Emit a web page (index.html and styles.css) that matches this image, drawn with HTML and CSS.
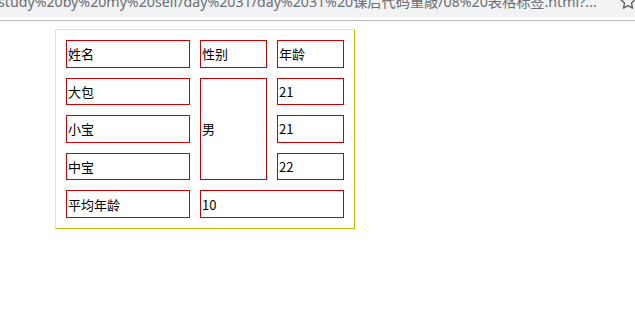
FILE: index.html
```html
<!DOCTYPE html>
<html lang="zh-CN">
<head>
<meta charset="utf-8">
<title>08 表格标签</title>
<link rel="stylesheet" href="styles.css">
</head>
<body>
<div class="chrome">
  <div class="bar">
    <span class="url">study%20by%20my%20self/day%2031/day%2031%20课后代码重敲/08%20表格标签.html?...</span>
    <svg class="star" width="18" height="18" viewBox="0 0 18 18"><path d="M9 1.5l2.2 4.6 5 .6-3.7 3.4 1 5-4.5-2.5-4.5 2.5 1-5L1.8 6.7l5-.6z" fill="none" stroke="#5f6368" stroke-width="1.4" stroke-linejoin="round"/></svg>
  </div>
  <div class="sep"></div>
</div>
<main class="page">
  <table class="grid">
    <tr>
      <td class="c1">姓名</td>
      <td class="c2">性别</td>
      <td class="c3">年龄</td>
    </tr>
    <tr>
      <td>大包</td>
      <td rowspan="3">男</td>
      <td>21</td>
    </tr>
    <tr>
      <td>小宝</td>
      <td>21</td>
    </tr>
    <tr>
      <td>中宝</td>
      <td>22</td>
    </tr>
    <tr>
      <td>平均年龄</td>
      <td colspan="2">10</td>
    </tr>
  </table>
</main>
</body>
</html>
```
FILE: styles.css
```css
html, body {
  margin: 0;
  padding: 0;
  background: #fff;
}
body {
  font-family: "Noto Sans CJK SC", "Noto Sans", sans-serif;
}
.chrome {
  height: 21px;
  display: flex;
  flex-direction: column;
}
.bar {
  height: 17px;
  background: #f1f3f4;
  overflow: hidden;
  position: relative;
}
.url {
  display: block;
  white-space: nowrap;
  font-family: "Noto Sans", "Noto Sans CJK SC", sans-serif;
  font-size: 14.2px;
  line-height: 20px;
  margin-top: -8px;
  margin-left: -2px;
  color: #6b6e72;
}
.star {
  position: absolute;
  right: -2px;
  top: -7px;
}
.sep {
  margin-top: 3px;
  height: 1px;
  background: #b9b9b9;
}
.page {
  padding: 8px 0 0 55px;
}
.grid {
  width: 300px;
  height: 200px;
  border-collapse: separate;
  border-spacing: 10px;
  border: 1px solid;
  border-color: #ffff00 #bfbf00 #bfbf00 #ffff00;
  font-size: 13px;
  color: #000;
}
.grid td {
  border: 1px solid #cc0000;
  padding: 1px;
  vertical-align: middle;
}
.c1 { width: 120px; }
.c2 { width: 63px; }
.c3 { width: 63px; }
```
